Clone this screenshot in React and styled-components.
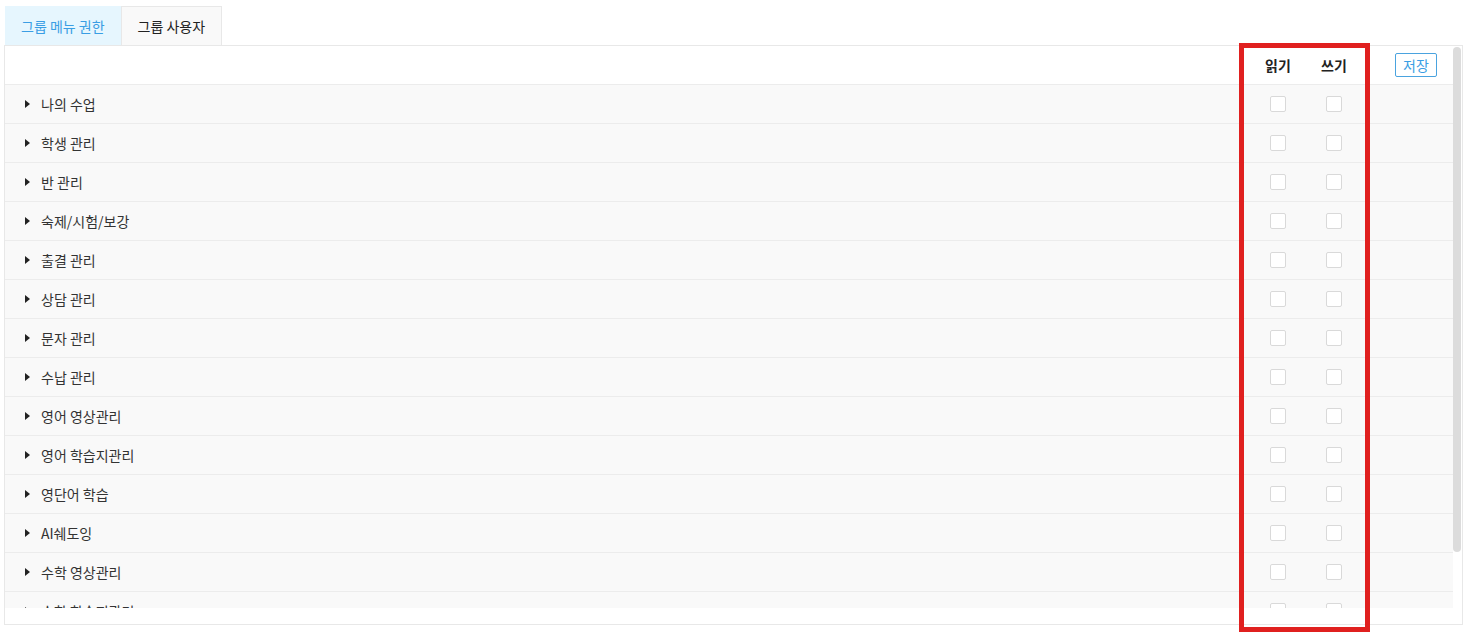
import React from 'react';
import styled, { createGlobalStyle } from 'styled-components';

const GlobalStyle = createGlobalStyle`
  html, body {
    margin: 0;
    padding: 0;
    background: #fff;
  }
  body {
    font-family: "Noto Sans CJK KR", "Noto Sans", sans-serif;
    color: #333;
  }
`;

const Page = styled.div`
  position: relative;
  padding: 6px 9px 0 4px;
  height: 633px;
  box-sizing: border-box;
`;

const Tabs = styled.div`
  display: flex;
  padding-left: 1px;
`;

const Tab = styled.div`
  height: 39px;
  padding: 0 16px;
  display: flex;
  align-items: center;
  box-sizing: border-box;
  font-size: 14px;
  background: ${p => (p.$active ? '#e6f6fe' : '#f9f9f9')};
  color: ${p => (p.$active ? '#3a9ee4' : '#222')};
  border: ${p => (p.$active ? 'none' : '1px solid #e8e8e8')};
  border-bottom: none;
`;

const Panel = styled.div`
  border: 1px solid #e8e8e8;
  height: 580px;
  box-sizing: border-box;
  padding-bottom: 16px;
  display: flex;
  flex-direction: column;
`;

const Body = styled.div`
  flex: 1;
  min-height: 0;
  display: flex;
`;

const Scroller = styled.div`
  flex: 1;
  overflow: hidden;
`;

const Track = styled.div`
  width: 9px;
  padding: 1px 1px 0 0;
  box-sizing: border-box;
  background: #fff;
`;

const Thumb = styled.div`
  height: 505px;
  border-radius: 4px;
  background: #dcdcdc;
`;

const Row = styled.div`
  display: grid;
  grid-template-columns: 1fr 56px 56px 91px;
  align-items: center;
  height: 39px;
  box-sizing: border-box;
  background: ${p => (p.$head ? '#fff' : '#f9f9f9')};
  border-bottom: 1px solid #ececec;
`;

const Label = styled.div`
  display: flex;
  align-items: center;
  gap: 11px;
  padding-left: 20px;
  font-size: 14px;
  color: #333;
`;

const Caret = styled.span`
  width: 0;
  height: 0;
  border-top: 4px solid transparent;
  border-bottom: 4px solid transparent;
  border-left: 5px solid #222;
`;

const HeadCell = styled.div`
  text-align: center;
  font-size: 14px;
  font-weight: 700;
  color: #222;
`;

const Cell = styled.div`
  display: flex;
  justify-content: center;
`;

const Check = styled.span`
  width: 16px;
  height: 16px;
  box-sizing: border-box;
  border: 1px solid #d9d9d9;
  border-radius: 2px;
  background: #fff;
`;

const Actions = styled.div`
  display: flex;
  justify-content: flex-end;
  padding-right: 16px;
`;

const SaveButton = styled.button`
  height: 24px;
  width: 42px;
  padding: 0;
  border: 1px solid #4aa3df;
  border-radius: 2px;
  background: #fff;
  color: #3a9ee4;
  font-family: inherit;
  font-size: 14px;
  line-height: 22px;
`;

const Highlight = styled.div`
  position: absolute;
  left: 1239px;
  top: 43px;
  width: 131px;
  height: 589px;
  box-sizing: border-box;
  border: 5px solid #e0201f;
  pointer-events: none;
`;

const menus = [
  '나의 수업',
  '학생 관리',
  '반 관리',
  '숙제/시험/보강',
  '출결 관리',
  '상담 관리',
  '문자 관리',
  '수납 관리',
  '영어 영상관리',
  '영어 학습지관리',
  '영단어 학습',
  'AI쉐도잉',
  '수학 영상관리',
  '수학 학습지관리',
  '환경 설정',
];

export default function App() {
  return (
    <Page>
      <GlobalStyle />
      <Tabs>
        <Tab $active>그룹 메뉴 권한</Tab>
        <Tab>그룹 사용자</Tab>
      </Tabs>
      <Panel>
        <Body>
          <Scroller>
            <Row $head>
              <div />
              <HeadCell>읽기</HeadCell>
              <HeadCell>쓰기</HeadCell>
              <Actions>
                <SaveButton>저장</SaveButton>
              </Actions>
            </Row>
            {menus.map(name => (
              <Row key={name}>
                <Label>
                  <Caret />
                  {name}
                </Label>
                <Cell><Check /></Cell>
                <Cell><Check /></Cell>
                <div />
              </Row>
            ))}
          </Scroller>
          <Track>
            <Thumb />
          </Track>
        </Body>
      </Panel>
      <Highlight />
    </Page>
  );
}
